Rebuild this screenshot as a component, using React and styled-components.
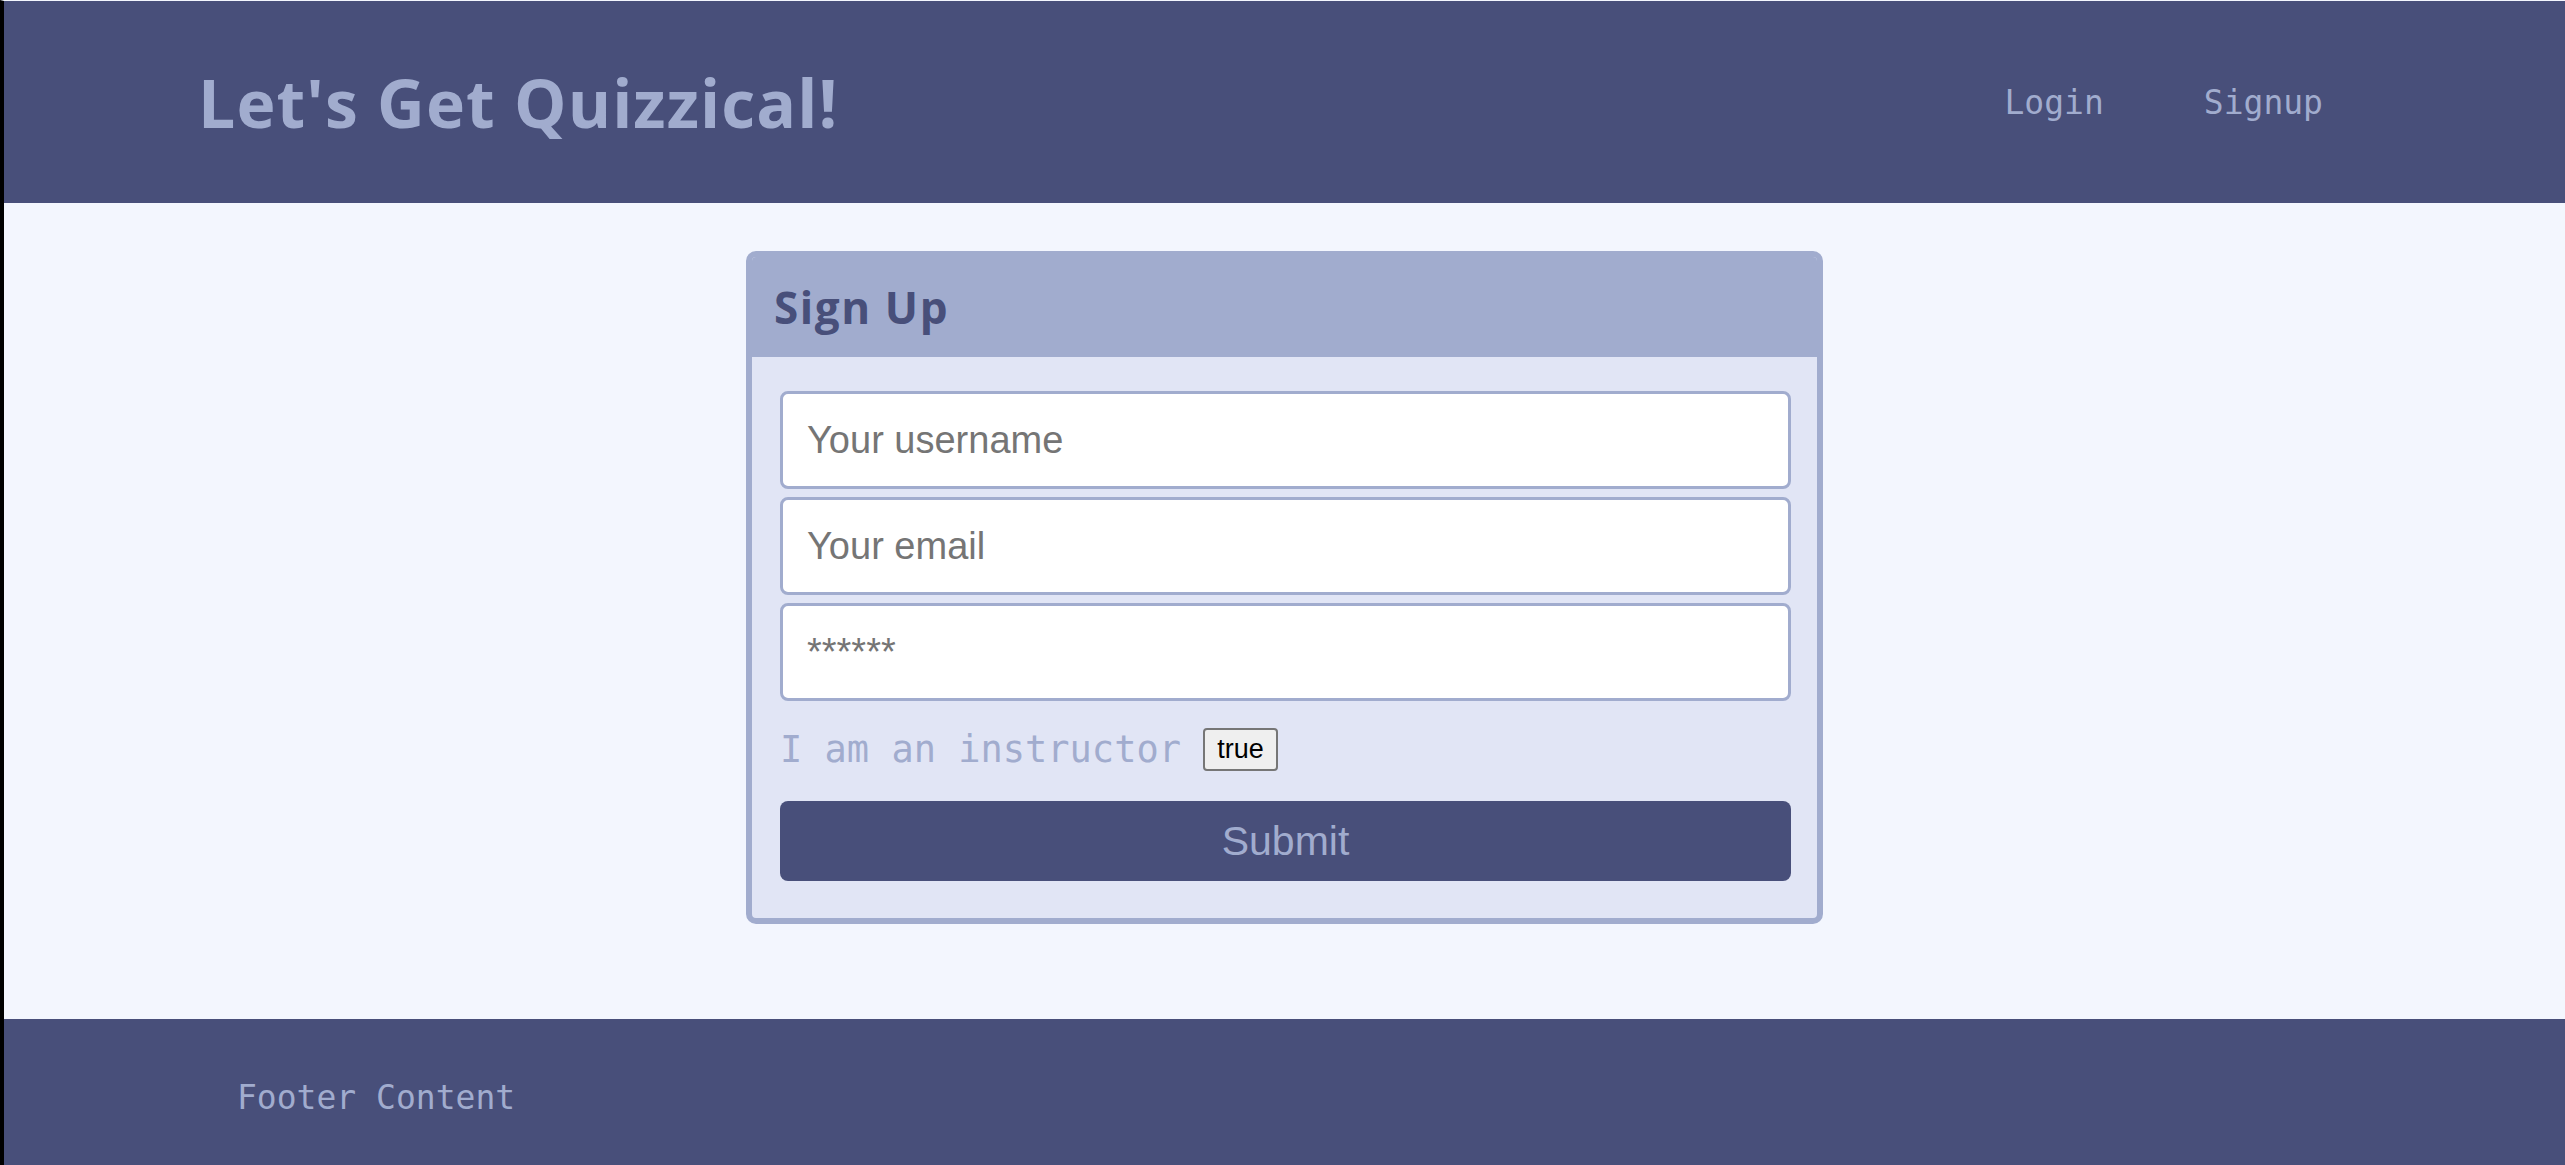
import React from 'react';
import styled, { createGlobalStyle } from 'styled-components';

const GlobalStyle = createGlobalStyle`
  html, body {
    margin: 0;
    padding: 0;
    background: #f3f6fe;
    overflow: hidden;
  }
  body {
    border-left: 4px solid #000;
    border-top: 1px solid #f3f6fe;
    font-family: "Liberation Sans", Arial, sans-serif;
  }
  * {
    box-sizing: border-box;
  }
`;

const Page = styled.div`
  display: flex;
  flex-direction: column;
  min-height: 1164px;
`;

const Header = styled.header`
  display: flex;
  justify-content: space-between;
  align-items: center;
  height: 202px;
  padding: 0 192px 0 194px;
  background: #484f7a;
`;

const Title = styled.h1`
  margin: 0;
  font-family: "Open Sans", sans-serif;
  font-size: 66px;
  font-weight: 700;
  letter-spacing: 1.1px;
  color: #a1acce;
`;

const Nav = styled.nav`
  display: flex;
`;

const NavLink = styled.a`
  padding: 0 50px;
  font-family: "DejaVu Sans Mono", monospace;
  font-size: 33px;
  color: #a1acce;
  text-decoration: none;
  cursor: pointer;
`;

const Main = styled.main`
  flex: 1;
  padding: 48px 0 95px;
`;

const Card = styled.div`
  width: 1077px;
  margin: 0 auto;
  border: 6px solid #a1acce;
  border-radius: 10px;
  background: #e1e5f5;
  overflow: hidden;
`;

const CardHeader = styled.div`
  display: flex;
  align-items: center;
  height: 100px;
  padding-left: 22px;
  background: #a1acce;
`;

const CardTitle = styled.h2`
  margin: 0;
  font-family: "Open Sans", sans-serif;
  font-size: 44px;
  font-weight: 700;
  letter-spacing: 1.6px;
  color: #484f7a;
`;

const Form = styled.form`
  display: flex;
  flex-direction: column;
  padding: 34px 26px 37px 28px;
`;

const Input = styled.input`
  display: block;
  width: 100%;
  height: 98px;
  margin-bottom: 8px;
  padding: 0 24px;
  border: 3px solid #a1acce;
  border-radius: 8px;
  background: #fff;
  font-family: "Liberation Sans", Arial, sans-serif;
  font-size: 38px;
  color: #333;
  outline: none;

  &::placeholder {
    color: #757575;
  }
`;

const ToggleRow = styled.div`
  display: flex;
  align-items: center;
  height: 43px;
  margin-top: 19px;
`;

const ToggleLabel = styled.span`
  font-family: "DejaVu Sans Mono", monospace;
  font-size: 37px;
  color: #a1acce;
  white-space: pre;
`;

const ToggleButton = styled.button`
  height: 43px;
  padding: 0 12px;
  border: 2px solid #767676;
  border-radius: 4px;
  background: #efefef;
  font-family: "Liberation Sans", Arial, sans-serif;
  font-size: 27px;
  color: #000;
`;

const SubmitButton = styled.button`
  width: 100%;
  height: 80px;
  margin-top: 30px;
  border: none;
  border-radius: 8px;
  background: #484f7a;
  font-family: "Liberation Sans", Arial, sans-serif;
  font-size: 41px;
  color: #a1acce;
  cursor: pointer;
`;

const Footer = styled.footer`
  display: flex;
  align-items: center;
  height: 147px;
  padding: 10px 0 0 233px;
  background: #484f7a;
`;

const FooterText = styled.span`
  font-family: "DejaVu Sans Mono", monospace;
  font-size: 33px;
  color: #a1acce;
`;

const App = () => {
  return (
    <>
      <GlobalStyle />
      <Page>
        <Header>
          <Title>Let's Get Quizzical!</Title>
          <Nav>
            <NavLink>Login</NavLink>
            <NavLink>Signup</NavLink>
          </Nav>
        </Header>
        <Main>
          <Card>
            <CardHeader>
              <CardTitle>Sign Up</CardTitle>
            </CardHeader>
            <Form onSubmit={(e) => e.preventDefault()}>
              <Input type="text" placeholder="Your username" />
              <Input type="email" placeholder="Your email" />
              <Input type="password" placeholder="******" />
              <ToggleRow>
                <ToggleLabel>I am an instructor </ToggleLabel>
                <ToggleButton type="button">true</ToggleButton>
              </ToggleRow>
              <SubmitButton type="submit">Submit</SubmitButton>
            </Form>
          </Card>
        </Main>
        <Footer>
          <FooterText>Footer Content</FooterText>
        </Footer>
      </Page>
    </>
  );
};

export default App;
